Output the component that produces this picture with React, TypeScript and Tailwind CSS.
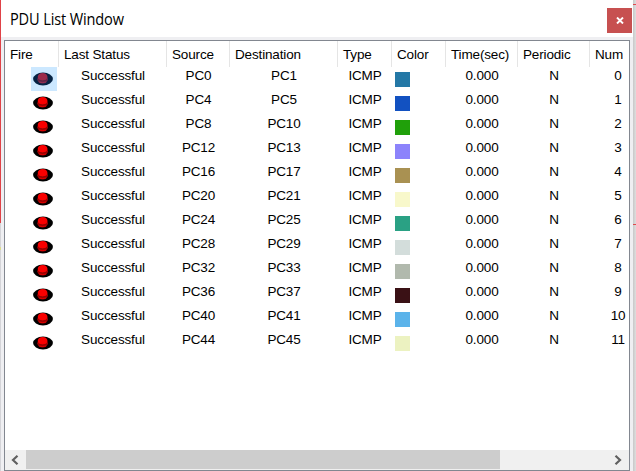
type Pdu = { source: string; destination: string; color: string };

const pdus: Pdu[] = [
  { source: 'PC0', destination: 'PC1', color: '#2478a6' },
  { source: 'PC4', destination: 'PC5', color: '#1251c1' },
  { source: 'PC8', destination: 'PC10', color: '#20a00a' },
  { source: 'PC12', destination: 'PC13', color: '#8c83fb' },
  { source: 'PC16', destination: 'PC17', color: '#a99152' },
  { source: 'PC20', destination: 'PC21', color: '#f8f8cb' },
  { source: 'PC24', destination: 'PC25', color: '#2aa184' },
  { source: 'PC28', destination: 'PC29', color: '#d3dddb' },
  { source: 'PC32', destination: 'PC33', color: '#b1b9ad' },
  { source: 'PC36', destination: 'PC37', color: '#3a1115' },
  { source: 'PC40', destination: 'PC41', color: '#5bb3ea' },
  { source: 'PC44', destination: 'PC45', color: '#ecf2c1' },
];

const headers = ['Fire', 'Last Status', 'Source', 'Destination', 'Type', 'Color', 'Time(sec)', 'Periodic', 'Num'];
const columns = 'grid grid-cols-[54px_108px_63px_108px_54px_54px_72px_72px_56px]';

function FireButton({ selected }: { selected: boolean }) {
  return (
    <svg width="20" height="14" viewBox="0 0 20 14">
      <ellipse cx="10" cy="7" rx="9.9" ry="6.5" fill={selected ? '#052344' : '#000'} />
      <ellipse cx="9.6" cy="7.2" rx="5.3" ry="4.2" fill={selected ? '#70284c' : '#a80000'} />
      <ellipse cx="9.6" cy="4.8" rx="4.8" ry="3.9" fill={selected ? '#9b2a4b' : '#fa0000'} />
      <path d="M4.9 7.8c2.4 1.6 7 1.6 9.4 0" fill="none" stroke={selected ? '#592443' : '#900000'} />
      <path d="M6.5 10c2 .7 4.3.7 6.3 0" fill="none" stroke={selected ? '#963154' : '#e00000'} />
    </svg>
  );
}

export default function App() {
  return (
    <div className="flex h-[471px] w-[636px] overflow-hidden bg-[#efeff2] font-['Liberation_Sans',Arial,sans-serif] text-[13.5px] leading-4 tracking-[-0.15px] text-black">
      <div className="flex w-px shrink-0 flex-col">
        <div className="h-[223px] bg-[#df4247]" />
        <div className="h-6 bg-[#d4d4d8]" />
        <div className="h-[3px] bg-[#dddd8d]" />
        <div className="flex-1 bg-[#d4d4d8]" />
      </div>
      <div className="flex w-[632px] shrink-0 flex-col">
        <header className="flex h-[37px] shrink-0 items-start justify-between bg-white pr-[1px] pl-[9px]">
          <h1 className="origin-left scale-x-[0.94] pt-[9px] font-['Open_Sans',sans-serif] text-[15.5px] leading-5 whitespace-nowrap">PDU List Window</h1>
          <button aria-label="Close" className="mt-2 flex size-[25px] items-center justify-center bg-[#c75050]">
            <svg width="8" height="7" viewBox="0 0 8 7" fill="none" stroke="white" strokeWidth="1.9">
              <path d="m1 .5 6 6m0-6-6 6" />
            </svg>
          </button>
        </header>
        <main className="mt-[3px] ml-[3px] flex h-[431px] w-[626px] flex-col overflow-hidden border border-[#828790] bg-white">
          <div className={`${columns} h-[26px] shrink-0`}>
            {headers.map((header, i) => (
              <div key={header} className={`pt-[6px] pl-[5px] whitespace-nowrap ${i < 8 ? 'border-r border-[#e5e5e5]' : ''}`}>{header}</div>
            ))}
          </div>
          <div className="flex-1">
            {pdus.map((pdu, i) => (
              <div key={pdu.source} className={`${columns} h-6`}>
                <div className={`ml-[26px] flex w-[26px] items-center justify-start pl-0.5 ${i === 0 ? 'bg-[#cce8ff]' : ''}`}>
                  <FireButton selected={i === 0} />
                </div>
                <span className="pt-px text-center">Successful</span>
                <span className="pt-px text-center">{pdu.source}</span>
                <span className="pt-px text-center">{pdu.destination}</span>
                <span className="pt-px text-center">ICMP</span>
                <span className="mt-[5px] ml-[3px] size-[15px]" style={{ backgroundColor: pdu.color }} />
                <span className="pt-px text-center">0.000</span>
                <span className="pt-px text-center">N</span>
                <span className="pt-px text-center">{i}</span>
              </div>
            ))}
          </div>
          <div className="flex h-5 shrink-0 bg-[#f0f0f0] pb-px">
            <div className="flex w-[21px] items-center justify-center pr-[2px]">
              <svg width="8" height="10" viewBox="0 0 8 10" fill="none" stroke="#606060" strokeWidth="2.2"><path d="M6.5 .8 2 5l4.5 4.2" /></svg>
            </div>
            <div className="w-[474px] bg-[#cdcdcd]" />
            <div className="flex flex-1 items-center justify-end pr-[7px]">
              <svg width="8" height="10" viewBox="0 0 8 10" fill="none" stroke="#606060" strokeWidth="2.2"><path d="M1.5.8 6 5 1.5 9.2" /></svg>
            </div>
          </div>
        </main>
      </div>
      <div className="flex w-[3px] shrink-0 flex-col bg-linear-to-r from-[#c8c8c8] to-[#dedede]">
        <div className="mt-1 h-px bg-[#e04b4e]" />
        <div className="mt-[219px] h-px bg-[#e04b4e]" />
      </div>
    </div>
  );
}
